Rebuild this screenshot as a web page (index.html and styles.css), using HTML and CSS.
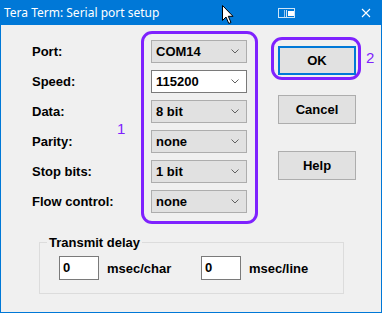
FILE: index.html
```html
<!DOCTYPE html>
<html lang="en">
<head>
    <meta charset="UTF-8">
    <title>Tera Term: Serial port setup</title>
    <link rel="stylesheet" href="styles.css">
</head>
<body>
    <div class="window">
        <div class="titlebar">
            <span class="title">Tera Term: Serial port setup</span>
            <svg class="snap-icon" width="18" height="11" viewBox="0 0 18 11">
                <rect x="0.5" y="0.5" width="16" height="9" fill="none" stroke="#cde4f7"/>
                <line x1="6.5" y1="2" x2="6.5" y2="9" stroke="#9cc8ee"/>
                <line x1="8.5" y1="2" x2="8.5" y2="9" stroke="#cde4f7"/>
                <rect x="10.5" y="3.5" width="5" height="4" fill="#ffffff" stroke="#ffffff"/>
            </svg>
            <svg class="close-icon" width="10" height="10" viewBox="0 0 10 10">
                <path d="M1 1 L9 9 M9 1 L1 9" stroke="#ffffff" stroke-width="1.1"/>
            </svg>
            <svg class="cursor" width="13" height="20" viewBox="0 0 13 20">
                <path d="M0.5 0.5 L0.5 15.5 L4 12 L6.8 18.5 L9 17.5 L6.3 11.3 L11 11.3 Z" fill="#ffffff" stroke="#000000" stroke-width="1"/>
            </svg>
        </div>

        <div class="client">
            <div class="top">
                <div class="fields">
                    <label>Port:</label>
                    <div class="combo"><span>COM14</span><svg class="chev" width="8" height="5" viewBox="0 0 8 5"><path d="M0.5 0.5 L4 4 L7.5 0.5" fill="none" stroke="#606060"/></svg></div>

                    <label>Speed:</label>
                    <div class="combo editable"><span>115200</span><svg class="chev" width="8" height="5" viewBox="0 0 8 5"><path d="M0.5 0.5 L4 4 L7.5 0.5" fill="none" stroke="#606060"/></svg></div>

                    <label>Data:</label>
                    <div class="combo"><span>8 bit</span><svg class="chev" width="8" height="5" viewBox="0 0 8 5"><path d="M0.5 0.5 L4 4 L7.5 0.5" fill="none" stroke="#606060"/></svg></div>

                    <label>Parity:</label>
                    <div class="combo"><span>none</span><svg class="chev" width="8" height="5" viewBox="0 0 8 5"><path d="M0.5 0.5 L4 4 L7.5 0.5" fill="none" stroke="#606060"/></svg></div>

                    <label>Stop bits:</label>
                    <div class="combo"><span>1 bit</span><svg class="chev" width="8" height="5" viewBox="0 0 8 5"><path d="M0.5 0.5 L4 4 L7.5 0.5" fill="none" stroke="#606060"/></svg></div>

                    <label>Flow control:</label>
                    <div class="combo"><span>none</span><svg class="chev" width="8" height="5" viewBox="0 0 8 5"><path d="M0.5 0.5 L4 4 L7.5 0.5" fill="none" stroke="#606060"/></svg></div>
                </div>

                <div class="buttons">
                    <button class="btn ok">OK</button>
                    <button class="btn cancel">Cancel</button>
                    <button class="btn help">Help</button>
                </div>
            </div>

            <fieldset class="delay">
                <legend>Transmit delay</legend>
                <div class="delay-row">
                    <div class="delay-item">
                        <div class="textbox">0</div>
                        <span>msec/char</span>
                    </div>
                    <div class="delay-item">
                        <div class="textbox">0</div>
                        <span>msec/line</span>
                    </div>
                </div>
            </fieldset>

            <!-- annotation marks drawn over the dialog -->
            <div class="mark mark-fields"></div>
            <span class="mark-num num-1">1</span>
            <div class="mark mark-ok"></div>
            <span class="mark-num num-2">2</span>
        </div>
    </div>
</body>
</html>
```

FILE: styles.css
```css
:root {
    --win-blue: #0078d7;
    --face: #f0f0f0;
    --mark: #7f22fe;
}

body {
    margin: 0;
    font-family: "Liberation Sans", Arial, sans-serif;
}

.window {
    width: 382px;
    height: 313px;
    background: var(--face);
    position: relative;
}

.titlebar {
    height: 25px;
    background: var(--win-blue);
    display: flex;
    align-items: center;
    position: relative;
}

.title {
    color: #fff;
    font-family: "Noto Sans", sans-serif;
    font-size: 12px;
    margin-left: 4px;
    margin-top: -1px;
}

.snap-icon {
    margin-left: auto;
    margin-top: 1px;
}

.close-icon {
    margin-left: 65px;
    margin-right: 11px;
}

.cursor {
    position: absolute;
    left: 222px;
    top: 5px;
}

.client {
    position: relative;
    height: 287px;
    border: 1px solid var(--win-blue);
    border-top: none;
}

.top {
    display: flex;
}

.fields {
    display: grid;
    grid-template-columns: 119px 96px;
    grid-auto-rows: 23px;
    row-gap: 7px;
    margin: 15px 0 0 31px;
}

label {
    align-self: center;
    font-size: 13px;
    font-weight: bold;
    color: #000;
}

.combo {
    display: flex;
    align-items: center;
    justify-content: space-between;
    box-sizing: border-box;
    height: 23px;
    padding: 0 7px 0 4px;
    background: #e1e1e1;
    border: 1px solid #adadad;
    font-size: 13px;
    font-weight: bold;
}

.combo.editable {
    background: #fff;
    border-color: #7a7a7a;
}

.buttons {
    display: flex;
    flex-direction: column;
    margin-left: 31px;
}

.btn {
    width: 78px;
    height: 29px;
    box-sizing: border-box;
    background: #e1e1e1;
    border: 1px solid #adadad;
    font-family: "Liberation Sans", Arial, sans-serif;
    font-size: 13px;
    font-weight: bold;
    color: #000;
    padding: 0;
}

.btn.ok {
    margin-top: 21px;
    border: 2px solid var(--win-blue);
}

.btn.cancel {
    margin-top: 20px;
}

.btn.help {
    margin-top: 27px;
}

.delay {
    box-sizing: border-box;
    width: 304px;
    margin: 22px 0 0 38px;
    padding: 6px 0 13px 19px;
    border: 1px solid #dcdcdc;
}

.delay legend {
    margin-left: -12px;
    padding: 0 2px;
    font-size: 13px;
    font-weight: bold;
}

.delay-row {
    display: flex;
}

.delay-item {
    display: flex;
    align-items: center;
    width: 142px;
    font-size: 13px;
    font-weight: bold;
}

.textbox {
    box-sizing: border-box;
    width: 40px;
    height: 24px;
    margin-right: 8px;
    padding: 3px 0 0 3px;
    background: #fff;
    border: 1px solid #7a7a7a;
}

.mark {
    position: absolute;
    border: 3px solid var(--mark);
    border-radius: 11px;
}

.mark-fields {
    left: 140px;
    top: 6px;
    width: 111px;
    height: 187px;
}

.mark-ok {
    left: 270px;
    top: 12px;
    width: 84px;
    height: 37px;
}

.mark-num {
    position: absolute;
    color: var(--mark);
    font-size: 15px;
}

.num-1 {
    left: 116px;
    top: 95px;
}

.num-2 {
    left: 365px;
    top: 24px;
}
```
